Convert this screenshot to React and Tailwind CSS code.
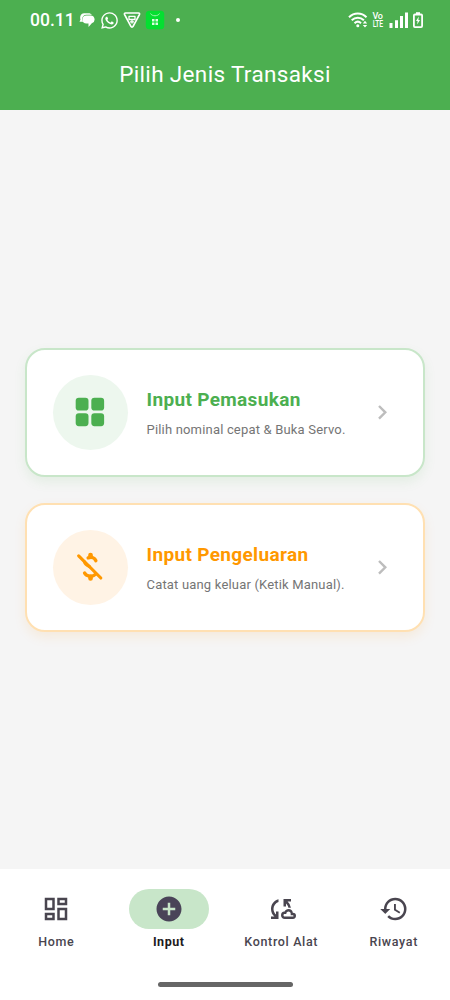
import { MdAddCircle, MdHistory, MdOutlineCloudSync, MdOutlineDashboard } from 'react-icons/md';
import { FaWhatsapp } from 'react-icons/fa';

const GridIcon = ({ className }) => (
  <svg viewBox="0 0 24 24" className={className} fill="currentColor">
    <rect x="3" y="3" width="8.200" height="8.200" rx="2" />
    <rect x="13" y="3" width="8.200" height="8.200" rx="2" />
    <rect x="3" y="13" width="8.200" height="8.200" rx="2" />
    <rect x="13" y="13" width="8.200" height="8.200" rx="2" />
  </svg>
);

const MoneyOffIcon = ({ className }) => (
  <svg viewBox="0 0 24 24" className={className} fill="none" stroke="currentColor" strokeLinecap="round">
    <path d="M4.900 5 19.100 19.200" strokeWidth="2" />
    <path d="M11 6.300c2.300-.8 4.300.2 4.900 1.800" strokeWidth="2.200" />
    <path d="M8.700 16c1.100 2.300 5.100 2.700 6.900.9" strokeWidth="2.200" />
    <path d="M12.500 4.500v1M12.500 18.500v1" strokeWidth="3" />
    <path d="M8.600 8.900c.4 1.500 1.600 2.300 3.200 2.900" strokeWidth="2" />
  </svg>
);

const ChevronIcon = () => (
  <svg viewBox="0 0 20 20" className="size-5 text-[#bdbdbd]" fill="none" stroke="currentColor" strokeWidth="2.400">
    <path d="M7 4 13.300 10.300 7 16.600" />
  </svg>
);

const StatusBar = () => (
  <div className="flex h-10 items-center pl-[30px] pr-[26px] text-white">
    <span className="w-[49px] pt-px text-[17.500px] font-medium leading-none">00.11</span>
    <svg viewBox="0 0 16 16" className="size-4" fill="currentColor">
      <path d="M5 1.200h4.500c1.500 0 2.700.6 3.500 1.600H7.500C4.800 2.800 3.300 4.500 3.300 6.800c0 1.300.4 2.200 1 3H.5l1-2.300C.6 4.500 2 1.200 5 1.200z" />
      <path d="M7.500 3.500h4a4 4 0 0 1 1.300 7.800L9.500 15v-3.500h-2a4 4 0 0 1 0-8z" />
    </svg>
    <FaWhatsapp className="ml-[5px] size-[19px]" />
    <svg viewBox="0 0 18 18" className="ml-[4px] size-[18px]" fill="none" stroke="currentColor" strokeWidth="1.700" strokeLinejoin="round">
      <path d="M2.500 2h13c.9 0 1.300.8.9 1.600L10.100 15.400c-.5.900-1.700.900-2.200 0L1.600 3.600C1.200 2.800 1.600 2 2.500 2z" />
      <path d="M6 5.300h6v3.200H6zM7 10.800h4M9 8.500v4" strokeWidth="1.300" />
    </svg>
    <svg viewBox="0 0 20 20" className="ml-[4px] size-5">
      <rect x=".8" y=".8" width="18.400" height="18.400" rx="3.500" fill="#05df31" />
      <path d="M5.500 3.500c1.500 3 7.500 3 9 0" fill="none" stroke="#9ff5ac" strokeWidth="1" />
      <path d="M7 9h2.500v2.500H7zM10.500 9H13v2.500h-2.500zM7 12.500h2.500V15H7zM10.500 12.500H13V15h-2.500z" fill="#d9ffe0" />
    </svg>
    <span className="ml-[11px] size-1 rounded-full bg-white" />

    <svg viewBox="0 0 20 18" className="ml-auto h-[18px] w-5" fill="none" stroke="currentColor" strokeWidth="2">
      <path d="M1 6.200c5-5 12.500-5 17.500 0M3.700 9.300c3.500-3.400 8.700-3.400 12.200 0M6.500 12.200c2-1.800 4.700-1.800 6.500 0" />
      <circle cx="9.800" cy="14.800" r="1.500" fill="currentColor" stroke="none" />
      <path d="M17 9.800l2.200 2.600h-4.400zM17 16.600l2.200-2.600h-4.400z" fill="currentColor" stroke="none" />
    </svg>
    <span className="ml-[4px] flex w-[11px] flex-col items-center text-[9px] font-medium leading-[8px] tracking-[-0.300px]">
      <span>Vo</span>
      <span className="scale-x-[.75]">LTE</span>
    </span>
    <svg viewBox="0 0 20 16" className="ml-[6px] h-4 w-5" fill="currentColor">
      <path d="M.5 11h3v5h-3zM6 8.200h3V16H6zM11 4h3v12h-3zM16 .5h3V16h-3z" />
    </svg>
    <svg viewBox="0 0 10 16" className="ml-[4px] mr-px h-4 w-[10px]" fill="none" stroke="currentColor">
      <rect x=".9" y="2.500" width="8.200" height="12.600" rx="1" strokeWidth="1.800" />
      <path d="M3 1.200h4" strokeWidth="2" />
      <path d="M5.800 4.500 3 9h1.600l-.5 3.500L7 8H5.400z" fill="currentColor" stroke="none" />
    </svg>
  </div>
);

const MenuCard = ({ icon: Icon, title, subtitle, card, circle, color }) => (
  <div className={`flex h-[129px] items-center rounded-[20px] border-2 bg-white pl-[25.500px] pr-[31px] ${card}`}>
    <div className={`flex size-[75px] shrink-0 items-center justify-center rounded-full ${circle}`}>
      <Icon className="size-[37.500px]" />
    </div>
    <div className="ml-[19px] flex-1 whitespace-nowrap pt-[2px]">
      <h2 className={`text-[19px] font-bold leading-6 tracking-[0.340px] ${color}`}>{title}</h2>
      <p className="mt-[10px] text-[13px] leading-4 tracking-[0.180px] text-[#757575]">{subtitle}</p>
    </div>
    <ChevronIcon />
  </div>
);

const NavItem = ({ icon: Icon, label, active }) => (
  <div className="flex flex-1 flex-col items-center">
    <div className={`flex h-10 w-20 items-center justify-center rounded-full ${active ? 'bg-[#c8e6c9]' : ''}`}>
      <Icon className={`size-[30px] ${active ? 'text-[#4a4458]' : 'text-[#49454f]'}`} />
    </div>
    <span className={`mt-[5px] text-[12.500px] leading-4 ${active ? 'font-bold tracking-[0.550px] text-[#1d1b20]' : 'font-medium tracking-[0.660px] text-[#49454f]'}`}>
      {label}
    </span>
  </div>
);

const navItems = [
  { icon: MdOutlineDashboard, label: 'Home' },
  { icon: MdAddCircle, label: 'Input', active: true },
  { icon: MdOutlineCloudSync, label: 'Kontrol Alat' },
  { icon: MdHistory, label: 'Riwayat' },
];

export default function App() {
  return (
    <div className="flex h-[1000px] w-[450px] flex-col overflow-hidden bg-[#f5f5f5] font-['Roboto',sans-serif]">
      <header className="h-[110px] shrink-0 bg-[#4caf50]">
        <StatusBar />
        <h1 className="pt-5 text-center text-[22.500px] leading-7 tracking-[0.350px] text-white">Pilih Jenis Transaksi</h1>
      </header>

      <main className="flex flex-1 flex-col justify-center gap-[26px] px-[25px]">
        <MenuCard
          icon={GridIcon}
          title="Input Pemasukan"
          subtitle="Pilih nominal cepat & Buka Servo."
          card="border-[#c8e6c9] shadow-[0_5px_12px_rgba(76,175,80,0.1)]"
          circle="bg-[#edf7ee] text-[#4caf50]"
          color="text-[#4caf50]"
        />
        <MenuCard
          icon={MoneyOffIcon}
          title="Input Pengeluaran"
          subtitle="Catat uang keluar (Ketik Manual)."
          card="border-[#ffe0b2] shadow-[0_5px_12px_rgba(255,152,0,0.1)]"
          circle="bg-[#fff3e5] text-[#ff9800]"
          color="text-[#ff9800]"
        />
      </main>

      <footer className="flex h-[131px] shrink-0 flex-col bg-white pt-5">
        <nav className="flex">
          {navItems.map((item) => (
            <NavItem key={item.label} {...item} />
          ))}
        </nav>
        <div className="mx-auto mb-[13px] mt-auto h-[5px] w-[135px] rounded-full bg-[#666]" />
      </footer>
    </div>
  );
}
